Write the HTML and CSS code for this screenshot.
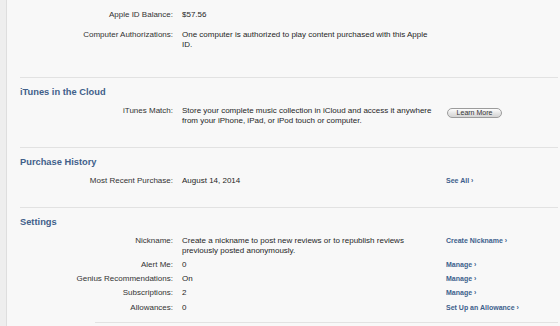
FILE: index.html
```html
<!doctype html>
<html lang="en">
<head>
    <meta charset="UTF-8">
    <title>Account Information</title>
    <link rel="stylesheet" href="styles.css">
</head>
<body>

<div class="page">
    <div class="section first">
        <div class="row">
            <div class="label">Apple ID Balance:</div>
            <div class="value">$57.56</div>
            <div class="action"></div>
        </div>
        <div class="row spaced">
            <div class="label">Computer Authorizations:</div>
            <div class="value">One computer is authorized to play content purchased with this Apple ID.</div>
            <div class="action"></div>
        </div>
    </div>

    <div class="section">
        <h2>iTunes in the Cloud</h2>
        <div class="row">
            <div class="label">iTunes Match:</div>
            <div class="value">Store your complete music collection in iCloud and access it anywhere from your iPhone, iPad, or iPod touch or computer.</div>
            <div class="action"><span class="btn">Learn More</span></div>
        </div>
    </div>

    <div class="section">
        <h2>Purchase History</h2>
        <div class="row">
            <div class="label">Most Recent Purchase:</div>
            <div class="value">August 14, 2014</div>
            <div class="action"><a href="#">See All &rsaquo;</a></div>
        </div>
    </div>

    <div class="section last">
        <h2>Settings</h2>
        <div class="row">
            <div class="label">Nickname:</div>
            <div class="value">Create a nickname to post new reviews or to republish reviews previously posted anonymously.</div>
            <div class="action"><a href="#">Create Nickname &rsaquo;</a></div>
        </div>
        <div class="row">
            <div class="label">Alert Me:</div>
            <div class="value">0</div>
            <div class="action"><a href="#">Manage &rsaquo;</a></div>
        </div>
        <div class="row">
            <div class="label">Genius Recommendations:</div>
            <div class="value">On</div>
            <div class="action"><a href="#">Manage &rsaquo;</a></div>
        </div>
        <div class="row">
            <div class="label">Subscriptions:</div>
            <div class="value">2</div>
            <div class="action"><a href="#">Manage &rsaquo;</a></div>
        </div>
        <div class="row">
            <div class="label">Allowances:</div>
            <div class="value">0</div>
            <div class="action"><a href="#">Set Up an Allowance &rsaquo;</a></div>
        </div>
        <div class="foot-line"></div>
    </div>
</div>

</body>
</html>
```

FILE: styles.css
```css
* {
    padding: 0;
    margin: 0;
}

body {
    background-color: #eeeeee;
    font-family: "Liberation Sans", Arial, sans-serif;
    font-size: 8px;
    color: #2e2e2e;
}

.page {
    margin-left: 6px;
    min-height: 326px;
    border-left: 1px solid #dedede;
    background-color: #f8f8f8;
    overflow: hidden;
}

.section {
    margin: 0 2px 0 13px;
    padding: 7.5px 0 19.5px;
    border-top: 1px solid #e2e2e2;
}

.section.first {
    border-top: none;
    padding: 7.5px 0 26px;
}

.section.last {
    padding-bottom: 0;
}

.section h2 {
    font-size: 9.3px;
    line-height: 13px;
    font-weight: bold;
    color: #41608a;
    margin-bottom: 5px;
}

.row {
    display: grid;
    grid-template-columns: 153px 256px 1fr;
    column-gap: 9px;
    padding: 2.3px 0;
    line-height: 9.6px;
}

.row.spaced {
    margin-top: 6px;
}

.row .label {
    text-align: right;
    color: #333333;
}

.row .value {
    color: #262626;
}

.row .action {
    margin-left: -1px;
    font-size: 7px;
}

.row .action a {
    font-weight: bold;
    color: #3d5f8c;
    text-decoration: none;
}

.btn {
    display: block;
    width: 53px;
    height: 8px;
    margin: 2px 0 0 1px;
    border: 1px solid #9c9c9c;
    border-radius: 5px;
    background: linear-gradient(#fdfdfd, #e2e2e2 60%, #d4d4d4);
    line-height: 8px;
    text-align: center;
    color: #333333;
}

.foot-line {
    margin: 8px 0 0 75px;
    border-top: 1px solid #e2e2e2;
}
```
